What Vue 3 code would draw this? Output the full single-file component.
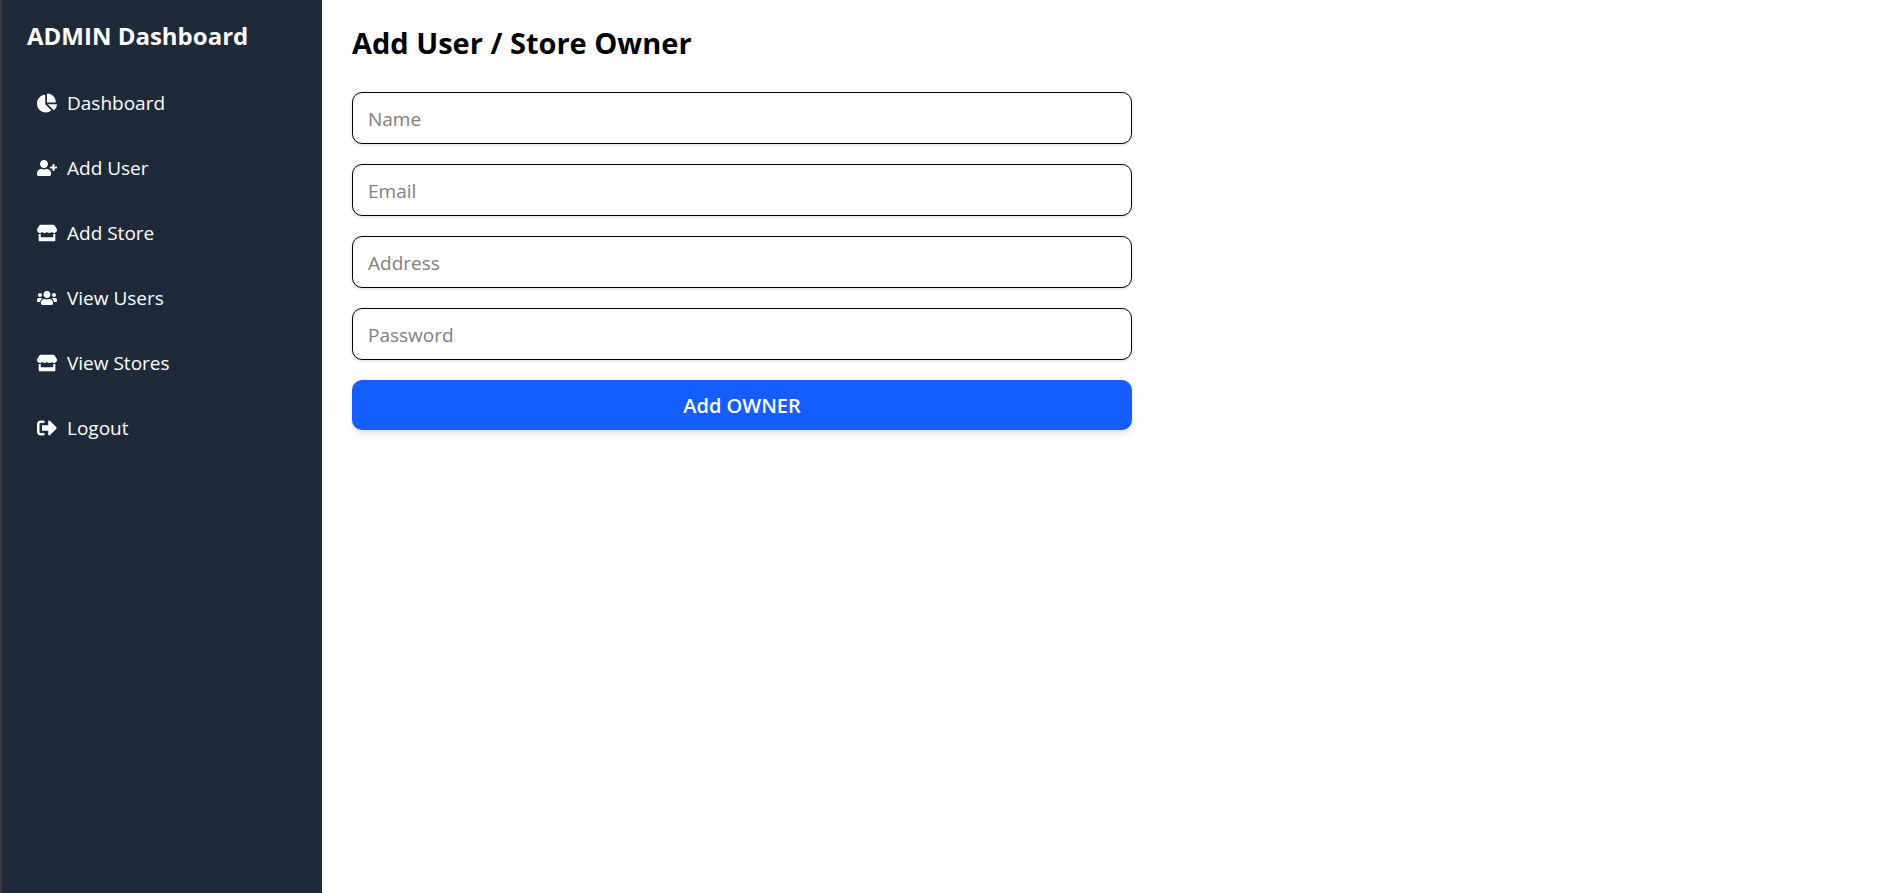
<script setup>
import { reactive } from 'vue'

const storeIcon = {
  box: '0 0 616 512',
  path: 'M602 118.6L537.1 15C531.3 5.7 521 0 510 0H106C95 0 84.7 5.7 78.9 15L14 118.6c-33.5 53.5-3.8 127.9 58.8 136.4 4.5.6 9.1.9 13.7.9 29.6 0 55.8-13 73.8-33.1 18 20.1 44.3 33.1 73.8 33.1 29.6 0 55.8-13 73.8-33.1 18 20.1 44.3 33.1 73.8 33.1 29.6 0 55.8-13 73.8-33.1 18.1 20.1 44.3 33.1 73.8 33.1 4.7 0 9.2-.3 13.7-.9 62.8-8.4 92.6-82.8 59-136.4zM529.5 288c-10 0-19.9-1.5-29.5-3.8V384H116v-99.8c-9.6 2.2-19.5 3.8-29.5 3.8-6 0-12.1-.4-18-1.2-5.6-.8-11.1-2.1-16.4-3.6V480c0 17.7 14.3 32 32 32h448c17.7 0 32-14.3 32-32V283.2c-5.4 1.6-10.8 2.9-16.4 3.6-6.1.8-12 1.2-18.2 1.2z',
}

const links = [
  {
    label: 'Dashboard',
    icon: {
      box: '0 0 544 512',
      path: 'M527.79 288H290.5l158.03 158.03c6.04 6.04 15.98 6.53 22.19.68 38.7-36.46 65.32-85.61 73.13-140.86 1.34-9.46-6.51-17.85-16.06-17.85zm-15.83-64.8C503.72 103.74 408.26 8.28 288.8.04 279.68-.59 272 7.1 272 16.24V240h223.77c9.14 0 16.82-7.68 16.19-16.8zM224 288V50.71c0-9.55-8.39-17.4-17.84-16.06C86.99 51.49-4.1 155.6.14 280.37 4.5 408.51 114.83 513.59 243.03 511.98c50.4-.63 96.97-16.87 135.26-44.03 7.9-5.6 8.42-17.23 1.57-24.08L224 288z',
    },
  },
  {
    label: 'Add User',
    icon: {
      box: '0 0 640 512',
      path: 'M624 208h-64v-64c0-8.8-7.2-16-16-16h-32c-8.8 0-16 7.2-16 16v64h-64c-8.8 0-16 7.2-16 16v32c0 8.8 7.2 16 16 16h64v64c0 8.8 7.2 16 16 16h32c8.8 0 16-7.2 16-16v-64h64c8.8 0 16-7.2 16-16v-32c0-8.8-7.2-16-16-16zm-400 48c70.7 0 128-57.3 128-128S294.7 0 224 0 96 57.3 96 128s57.3 128 128 128zm89.6 32h-16.7c-22.2 10.2-46.9 16-72.9 16s-50.6-5.8-72.9-16h-16.7C60.2 288 0 348.2 0 422.4V464c0 26.5 21.5 48 48 48h352c26.5 0 48-21.5 48-48v-41.6c0-74.2-60.2-134.4-134.4-134.4z',
    },
  },
  { label: 'Add Store', icon: storeIcon },
  {
    label: 'View Users',
    icon: {
      box: '0 0 640 512',
      path: 'M96 224c35.3 0 64-28.7 64-64s-28.7-64-64-64-64 28.7-64 64 28.7 64 64 64zm448 0c35.3 0 64-28.7 64-64s-28.7-64-64-64-64 28.7-64 64 28.7 64 64 64zm32 32h-64c-17.6 0-33.5 7.1-45.1 18.6 40.3 22.1 68.9 62 75.1 109.4h66c17.7 0 32-14.3 32-32v-32c0-35.3-28.7-64-64-64zm-256 0c61.9 0 112-50.1 112-112S381.9 32 320 32 208 82.1 208 144s50.1 112 112 112zm76.8 32h-8.3c-20.8 10-43.9 16-68.5 16s-47.6-6-68.5-16h-8.3C179.6 288 128 339.6 128 403.2V432c0 26.5 21.5 48 48 48h288c26.5 0 48-21.5 48-48v-28.8c0-63.6-51.6-115.2-115.2-115.2zm-223.7-13.4C161.5 263.1 145.6 256 128 256H64c-35.3 0-64 28.7-64 64v32c0 17.7 14.3 32 32 32h65.9c6.3-47.4 34.9-87.3 75.2-109.4z',
    },
  },
  { label: 'View Stores', icon: storeIcon },
  {
    label: 'Logout',
    icon: {
      box: '0 0 512 512',
      path: 'M497 273L329 441c-15 15-41 4.5-41-17v-96H152c-13.3 0-24-10.7-24-24v-96c0-13.3 10.7-24 24-24h136V88c0-21.4 25.9-32 41-17l168 168c9.3 9.4 9.3 24.6 0 34zM192 436v-40c0-6.6-5.4-12-12-12H96c-17.7 0-32-14.3-32-32V160c0-17.7 14.3-32 32-32h84c6.6 0 12-5.4 12-12V76c0-6.6-5.4-12-12-12H96c-53 0-96 43-96 96v192c0 53 43 96 96 96h84c6.6 0 12-5.4 12-12z',
    },
  },
]

const fields = [
  { key: 'name', label: 'Name', type: 'text' },
  { key: 'email', label: 'Email', type: 'email' },
  { key: 'address', label: 'Address', type: 'text' },
  { key: 'password', label: 'Password', type: 'password' },
]

const form = reactive({ name: '', email: '', address: '', password: '' })
</script>

<template>
  <div class="layout">
    <aside class="sidebar">
      <h2 class="brand">ADMIN Dashboard</h2>
      <nav class="nav">
        <a v-for="link in links" :key="link.label" class="nav-link" href="#">
          <svg class="nav-icon" :viewBox="link.icon.box" aria-hidden="true">
            <path :d="link.icon.path" />
          </svg>
          <span>{{ link.label }}</span>
        </a>
      </nav>
    </aside>

    <main class="content">
      <h1 class="title">Add User / Store Owner</h1>
      <form class="form" @submit.prevent>
        <input
          v-for="field in fields"
          :key="field.key"
          v-model="form[field.key]"
          class="field"
          :type="field.type"
          :placeholder="field.label"
          :aria-label="field.label"
        />
        <button class="submit" type="submit">Add OWNER</button>
      </form>
    </main>
  </div>
</template>

<style>
body {
  background: #fff;
}
</style>

<style scoped>
.layout {
  display: flex;
  min-height: 100vh;
  font-family: "Segoe UI", "Open Sans", "Noto Sans", sans-serif;
  font-size: 19px;
  line-height: 30px;
  color: #000;
}

.sidebar {
  box-sizing: border-box;
  flex: 0 0 322px;
  padding: 18px 25px;
  border-left: 2px solid #3b3a38;
  background: #1e2939;
  color: #fff;
}

.brand {
  margin: 0 0 24px;
  font-size: 24px;
  line-height: 36px;
  font-weight: 700;
}

.nav {
  display: flex;
  flex-direction: column;
  gap: 15px;
}

.nav-link {
  display: flex;
  align-items: center;
  gap: 10px;
  padding: 10px;
  border-radius: 5px;
  color: inherit;
  text-decoration: none;
}

.nav-link:hover {
  background: #364153;
}

.nav-icon {
  width: 20px;
  height: 20px;
  fill: currentColor;
}

.content {
  flex: 1;
  min-width: 0;
  padding: 23px 30px;
}

.title {
  margin: 0 0 29px;
  font-size: 29px;
  line-height: 40px;
  font-weight: 700;
}

.form {
  display: flex;
  flex-direction: column;
  gap: 20px;
  max-width: 780px;
}

.field {
  box-sizing: border-box;
  width: 100%;
  margin: 0;
  padding: 11px 15px 9px;
  border: 1px solid #000;
  border-radius: 10px;
  background: #fff;
  box-shadow: 0 1px 4px rgba(0, 0, 0, 0.1), 0 1px 3px -1px rgba(0, 0, 0, 0.1);
  color: inherit;
  font: inherit;
}

.field::placeholder {
  color: #808080;
  opacity: 1;
}

.submit {
  padding: 11px 15px 9px;
  border: 0;
  border-radius: 10px;
  background: #155dfc;
  box-shadow: 0 5px 8px -1px rgba(0, 0, 0, 0.1), 0 3px 5px -3px rgba(0, 0, 0, 0.1);
  color: #fff;
  font: inherit;
  font-size: 20px;
  font-weight: 600;
  cursor: pointer;
}
</style>
